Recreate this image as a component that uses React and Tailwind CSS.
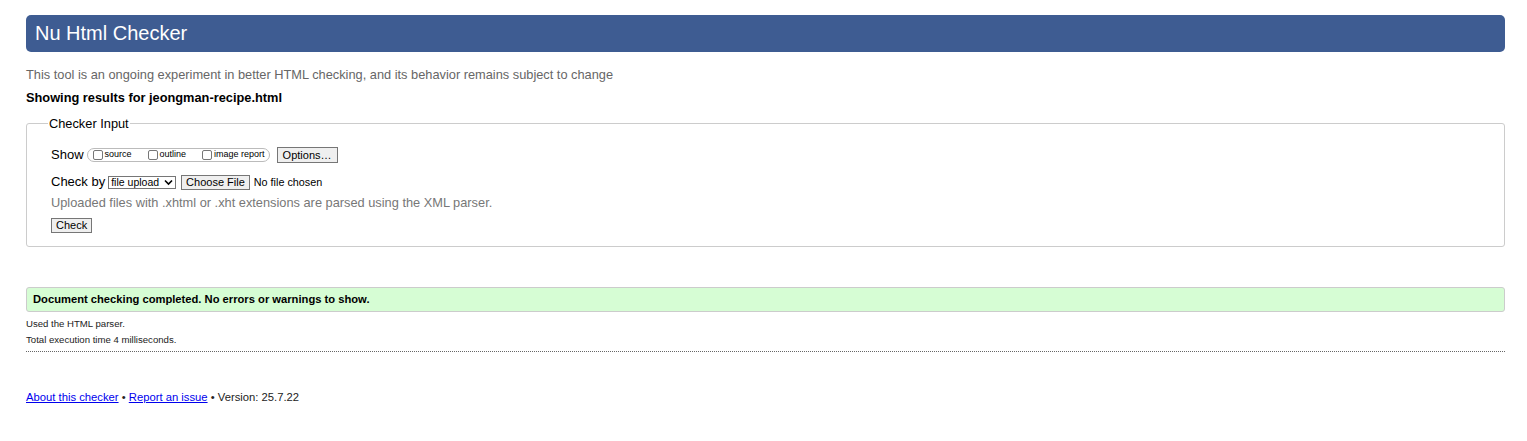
import React from "react";

export default function App() {
  return (
    <div className="min-h-screen bg-white pt-[15px] pl-[26px] pr-[22px] font-['Liberation_Sans',Arial,sans-serif] text-black">
      {/* Header */}
      <h1 className="h-[37px] rounded-[5px] bg-[#3e5c92] pl-[9px] text-[20px] leading-[37px] text-white">
        Nu Html Checker
      </h1>

      <p className="mt-[15px] text-[12.8px] leading-[16px] text-[#666]">
        This tool is an ongoing experiment in better HTML checking, and its behavior remains subject to change
      </p>
      <p className="mt-[7px] text-[12.8px] font-bold leading-[16px]">Showing results for jeongman-recipe.html</p>

      {/* Checker input */}
      <fieldset className="mt-[8px] rounded-[3px] border border-[#ccc] px-[24px] pb-[13px] pt-[14px]">
        <legend className="-ml-[3px] px-[1px] text-[12.8px]">Checker Input</legend>

        <div className="flex h-[16px] items-center text-[13px]">
          <span>Show</span>
          <div className="ml-[3px] flex h-[14px] items-center gap-[16px] rounded-[7px] border border-[#bbb] pl-[5px] pr-[4px] text-[9px]">
            <label className="flex items-center">
              <span className="mr-[2px] inline-block h-[10px] w-[10px] rounded-[2px] border border-[#777] bg-white" />
              source
            </label>
            <label className="flex items-center">
              <span className="mr-[2px] inline-block h-[10px] w-[10px] rounded-[2px] border border-[#777] bg-white" />
              outline
            </label>
            <label className="flex items-center">
              <span className="mr-[2px] inline-block h-[10px] w-[10px] rounded-[2px] border border-[#777] bg-white" />
              image report
            </label>
          </div>
          <button className="ml-[7px] h-[16px] border border-[#767676] bg-[#efefef] px-[5px] text-[11px] leading-[14px]">
            Options…
          </button>
        </div>

        <div className="mt-[11px] flex h-[16px] items-center text-[13px]">
          <span>Check by</span>
          <div className="ml-[3px] flex h-[13px] items-center border border-[#767676] bg-white pl-[2px] pr-[2px] text-[10.5px] leading-[11px]">
            file upload
            <svg width="9" height="7" viewBox="0 0 9 7" className="ml-[5px]">
              <path d="M1 1.5 L4.5 5 L8 1.5" stroke="#000" strokeWidth="1.6" fill="none" />
            </svg>
          </div>
          <button className="ml-[5px] h-[15px] border border-[#767676] bg-[#efefef] px-[4px] text-[11px] leading-[13px]">
            Choose File
          </button>
          <span className="ml-[4px] text-[10.8px]">No file chosen</span>
        </div>

        <p className="mt-[5px] text-[12.8px] leading-[16px] text-[#777]">
          Uploaded files with .xhtml or .xht extensions are parsed using the XML parser.
        </p>

        <button className="mt-[7px] block h-[15px] border border-[#767676] bg-[#efefef] px-[4px] text-[11px] leading-[13px]">
          Check
        </button>
      </fieldset>

      {/* Result */}
      <div className="mt-[40px] h-[25px] rounded-[3px] border border-[#ccc] bg-[#d6fdd4] pl-[6px] text-[11.2px] font-bold leading-[23px]">
        Document checking completed. No errors or warnings to show.
      </div>
      <p className="mt-[6px] text-[9.6px] leading-[12px] text-[#222]">Used the HTML parser.</p>
      <p className="mt-[4px] text-[9.6px] leading-[12px] text-[#222]">Total execution time 4 milliseconds.</p>
      <div className="mt-[5px] border-t border-dotted border-[#666]" />

      {/* Footer */}
      <p className="mt-[38px] text-[11.25px] leading-[14px] text-[#222]">
        <a href="#" className="text-[#00e] underline">About this checker</a>
        {" • "}
        <a href="#" className="text-[#00e] underline">Report an issue</a>
        {" • Version: 25.7.22"}
      </p>
    </div>
  );
}
